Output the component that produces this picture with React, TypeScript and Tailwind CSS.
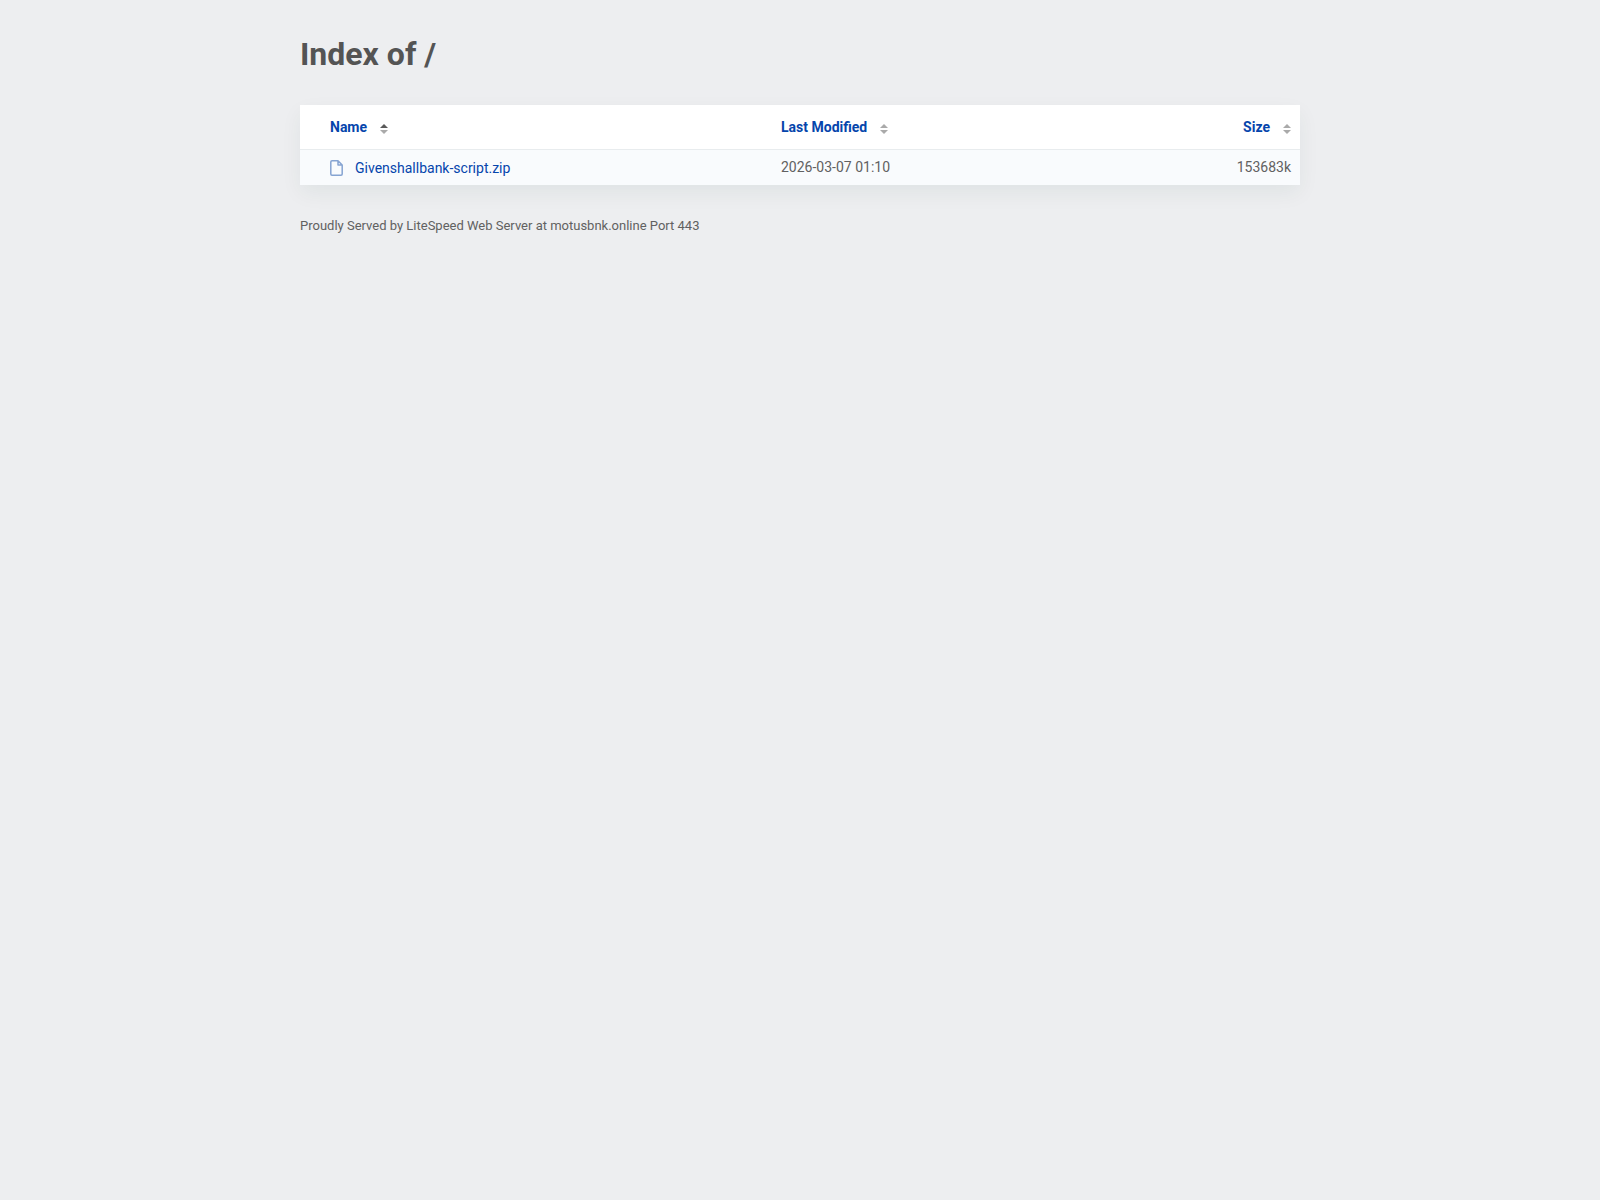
const columns = [
  { label: 'Name', sorted: true, className: 'w-[47%] pl-[30px] text-left' },
  { label: 'Last Modified', sorted: false, className: 'pl-[11px] text-left' },
  { label: 'Size', sorted: false, className: 'pr-[9px] text-right' },
];

const files = [
  {
    name: 'Givenshallbank-script.zip',
    modified: '2026-03-07 01:10',
    size: '153683k',
  },
];

const SortIcon = ({ sorted }: { sorted: boolean }) => (
  <svg
    className="mt-1"
    width="8"
    height="10"
    viewBox="0 0 8 10"
    aria-hidden="true"
  >
    <path d="M0 4L4 0L8 4Z" fill={sorted ? '#5a5a5a' : '#aaa'} />
    <path d="M0 6L4 10L8 6Z" fill="#aaa" />
  </svg>
);

const FileIcon = () => (
  <svg
    width="13"
    height="16"
    viewBox="0 0 13 16"
    fill="none"
    stroke="#86a4d2"
    strokeWidth="1.5"
    strokeLinejoin="round"
    aria-hidden="true"
  >
    <path d="M8 0.8H2C1.3 0.8 0.8 1.3 0.8 2V14C0.8 14.7 1.3 15.2 2 15.2H11C11.7 15.2 12.2 14.7 12.2 14V5L8 0.8V5H12.2" />
  </svg>
);

const App = () => {
  return (
    <main className="min-h-dvh bg-[#edeef0] font-[Roboto,sans-serif] text-sm text-[#616161]">
      <div className="mx-auto max-w-[1000px] pt-8">
        <h1 className="mb-7 text-[32px] font-bold leading-[45px] text-[#545454]">
          Index of /
        </h1>

        <table className="w-full bg-white shadow-[0_8px_20px_rgba(0,60,50,0.06)]">
          <thead>
            <tr className="h-11 border-b border-[#e8ecee]">
              {columns.map((column) => (
                <th key={column.label} className={column.className}>
                  <button className="inline-flex items-center gap-[13px] font-bold text-[#0545ac]">
                    {column.label}
                    <SortIcon sorted={column.sorted} />
                  </button>
                </th>
              ))}
            </tr>
          </thead>
          <tbody>
            {files.map((file) => (
              <tr key={file.name} className="h-9 bg-[#f9fbfd]">
                <td className="pl-[30px] pt-0.5">
                  <a
                    href={`/${file.name}`}
                    className="flex items-center gap-3 text-[#0545ac]"
                  >
                    <FileIcon />
                    {file.name}
                  </a>
                </td>
                <td className="pl-[11px]">{file.modified}</td>
                <td className="pr-[9px] text-right">{file.size}</td>
              </tr>
            ))}
          </tbody>
        </table>

        <footer className="pt-[31px] text-[13px] leading-5">
          Proudly Served by LiteSpeed Web Server at motusbnk.online Port 443
        </footer>
      </div>
    </main>
  );
};

export default App;
